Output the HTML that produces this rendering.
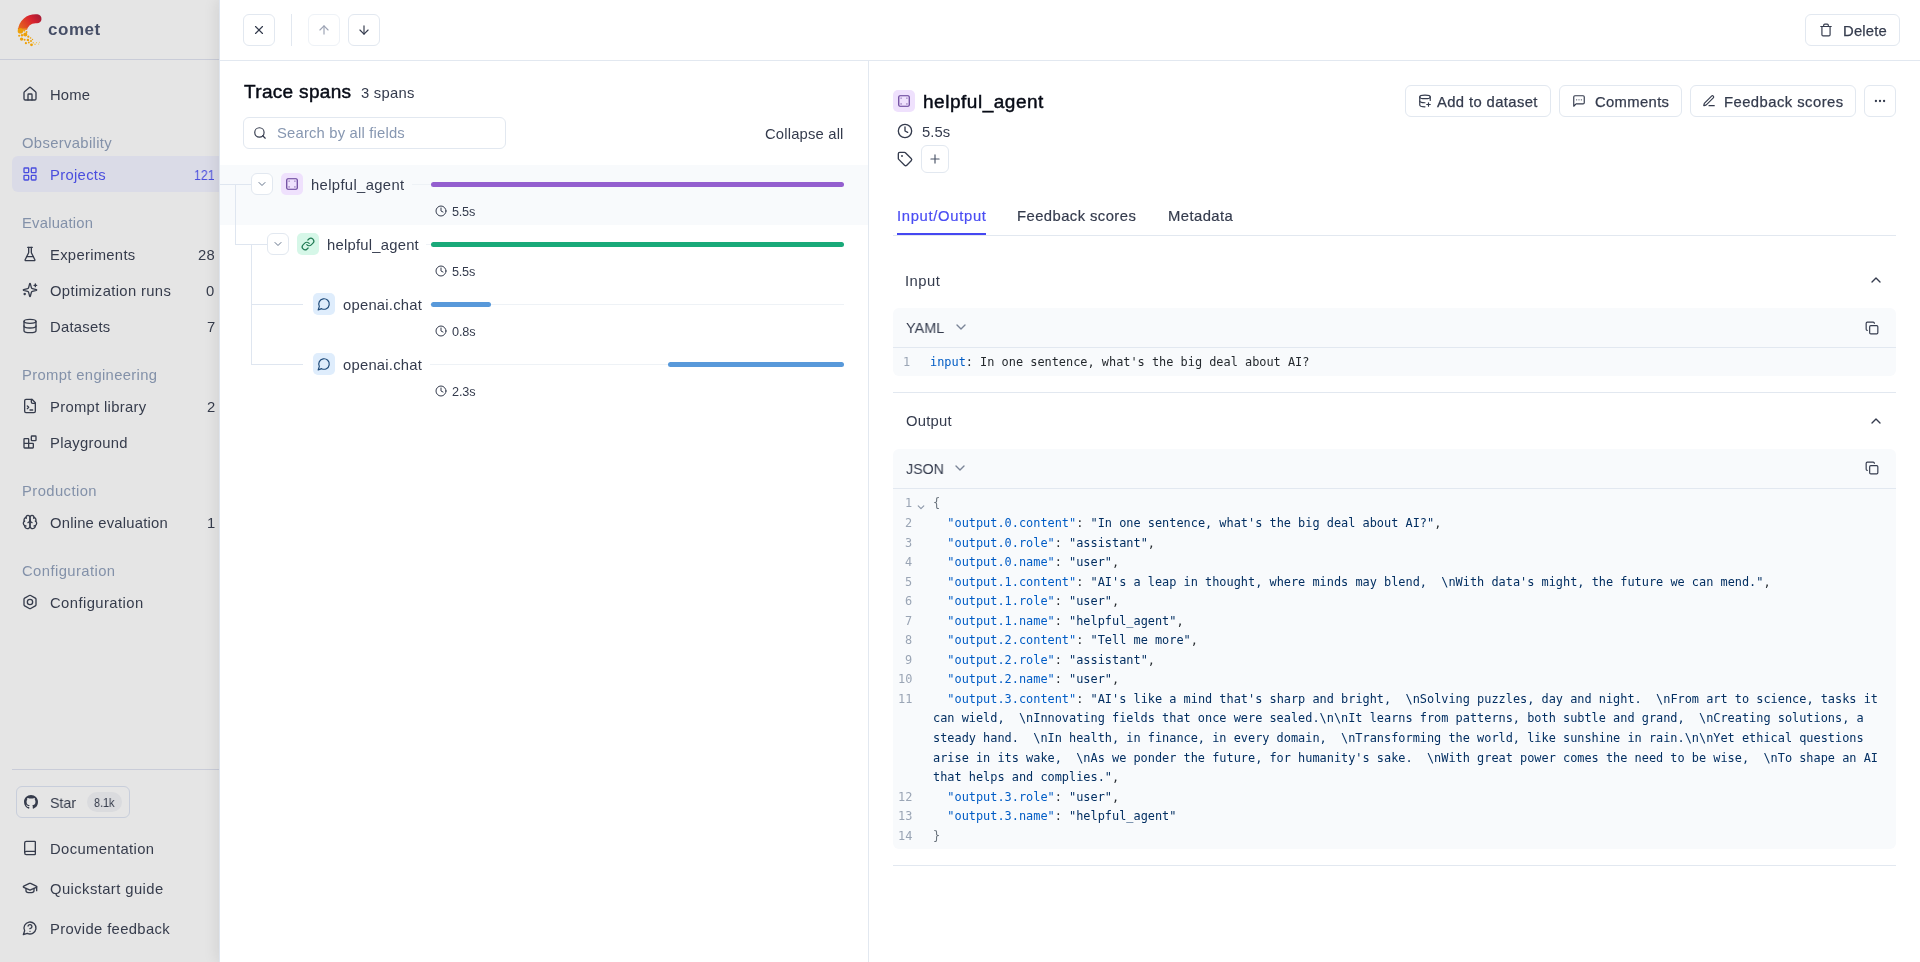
<!DOCTYPE html>
<html lang="en"><head><meta charset="utf-8"><title>Opik - Trace</title>
<style>
*{box-sizing:border-box;margin:0;padding:0}
html,body{width:1920px;height:962px;overflow:hidden;background:#fff}
body{position:relative;font-family:"Liberation Sans",sans-serif;font-size:14px;color:#373d4d}
.b,.t,.ic{position:absolute;display:block}
.t{white-space:pre;will-change:transform}
.ic{fill:none;stroke:currentColor;stroke-linecap:round;stroke-linejoin:round;overflow:visible}
.cd,.ln{font-family:"DejaVu Sans Mono","Liberation Mono",monospace;font-size:11.9px;line-height:19.5px;color:#24292e}
.ln{color:#9aa5b5;text-align:right}

</style></head>
<body>
<div class="b" style="left:0px;top:0px;width:220px;height:962px;background:#e5e5e5"></div>
<div class="b" style="left:0px;top:59px;width:220px;height:1px;background:#c9ccd8"></div>
<svg class="b" style="left:0;top:0" width="110" height="60" viewBox="0 0 110 60">
<defs><linearGradient id="lg" gradientUnits="userSpaceOnUse" x1="40" y1="16" x2="20" y2="32"><stop offset="0" stop-color="#a81c36"/><stop offset=".35" stop-color="#d8232f"/><stop offset="1" stop-color="#e8701a"/></linearGradient></defs>
<path d="M37 18.8C28.8 18.2 22.8 23.5 22.4 31" fill="none" stroke="url(#lg)" stroke-width="9" stroke-linecap="round"/>
<rect x="16" y="29.5" width="14" height="8" fill="#e5e5e5"/>
<path d="M17.9 29.6 L26.9 29.6 L26.9 28 L17.9 28Z" fill="#e6761b"/>
<g fill="#eda10a">
<circle cx="20.4" cy="30.9" r="2.7"/><circle cx="25.3" cy="34.5" r="2"/><circle cx="22" cy="35.3" r="1.2"/><circle cx="19.1" cy="35.8" r="1"/>
<circle cx="28.3" cy="36.7" r="1.1"/><circle cx="21.6" cy="39.1" r="1.7"/><circle cx="24.6" cy="39.8" r="1"/><circle cx="27.9" cy="39.9" r="1.2"/>
<circle cx="31" cy="41" r="1"/><circle cx="25.9" cy="43.2" r="1.1"/><circle cx="28.8" cy="42.5" r=".9"/><circle cx="31.5" cy="44.8" r="1.4"/>
<circle cx="24.2" cy="30.6" r="1.1"/><circle cx="26.6" cy="32" r=".9"/><circle cx="30.6" cy="38" r=".8"/><circle cx="32.5" cy="39.5" r=".7"/>
</g>
<g fill="#efc04a"><circle cx="33.3" cy="42.8" r=".8"/><circle cx="35" cy="44.2" r=".8"/><circle cx="36.5" cy="42.7" r=".6"/><circle cx="38.6" cy="44" r=".6"/><circle cx="39.5" cy="42.2" r=".5"/></g>
</svg>
<span class="t" style="left:48.25px;top:17.00px;font-size:17px;line-height:26px;color:#464e66;letter-spacing:0.548px;font-weight:700;">comet</span>
<svg class="ic" style="left:22px;top:86px;color:#363c4c" width="16" height="16" viewBox="0 0 24 24" stroke-width="2" ><path d="M15 21v-8a1 1 0 0 0-1-1h-4a1 1 0 0 0-1 1v8"/><path d="M3 10a2 2 0 0 1 .709-1.528l7-5.999a2 2 0 0 1 2.582 0l7 5.999A2 2 0 0 1 21 10v9a2 2 0 0 1-2 2H5a2 2 0 0 1-2-2z"/></svg>
<span class="t" style="left:49.85px;top:85.00px;font-size:14.8px;line-height:21px;color:#363c4c;letter-spacing:0.186px;">Home</span>
<span class="t" style="left:22.05px;top:133.00px;font-size:14.8px;line-height:21px;color:#8391a9;letter-spacing:0.348px;">Observability</span>
<div class="b" style="left:12px;top:156px;width:208px;height:36px;background:#dadbe7;border-radius:6px 0 0 6px"></div>
<svg class="ic" style="left:22px;top:166px;color:#4a4ede" width="16" height="16" viewBox="0 0 24 24" stroke-width="2" ><rect width="7" height="7" x="3" y="3" rx="1"/><rect width="7" height="7" x="14" y="3" rx="1"/><rect width="7" height="7" x="14" y="14" rx="1"/><rect width="7" height="7" x="3" y="14" rx="1"/></svg>
<span class="t" style="left:49.85px;top:165.00px;font-size:14.8px;line-height:21px;color:#4a4ede;letter-spacing:0.321px;">Projects</span>
<span class="t" style="left:193.96px;top:165.00px;font-size:14.8px;line-height:21px;color:#4a4ede;letter-spacing:0.000px;transform:scaleX(0.8355);transform-origin:0 0;">121</span>
<span class="t" style="left:21.55px;top:213.00px;font-size:14.8px;line-height:21px;color:#8391a9;letter-spacing:0.214px;">Evaluation</span>
<svg class="ic" style="left:22px;top:246px;color:#363c4c" width="16" height="16" viewBox="0 0 24 24" stroke-width="2" ><path d="M10 2v7.527a2 2 0 0 1-.211.896L4.720 20.550a1 1 0 0 0 .9 1.450h12.760a1 1 0 0 0 .9-1.450l-5.069-10.127A2 2 0 0 1 14 9.527V2"/><path d="M8.500 2h7"/><path d="M7 16h10"/></svg>
<span class="t" style="left:49.85px;top:245.00px;font-size:14.8px;line-height:21px;color:#363c4c;letter-spacing:0.296px;">Experiments</span>
<span class="t" style="left:198.05px;top:245.00px;font-size:14.8px;line-height:21px;color:#363c4c;letter-spacing:0.371px;">28</span>
<svg class="ic" style="left:22px;top:282px;color:#363c4c" width="16" height="16" viewBox="0 0 24 24" stroke-width="2" ><path d="M9.937 15.500A2 2 0 0 0 8.500 14.063l-6.135-1.582a.5.5 0 0 1 0-.962L8.500 9.936A2 2 0 0 0 9.937 8.500l1.582-6.135a.5.5 0 0 1 .963 0L14.063 8.500A2 2 0 0 0 15.500 9.937l6.135 1.581a.5.5 0 0 1 0 .964L15.500 14.063a2 2 0 0 0-1.437 1.437l-1.582 6.135a.5.5 0 0 1-.963 0z"/><path d="M20 3v4"/><path d="M22 5h-4"/><path d="M4 17v2"/><path d="M5 18H3"/></svg>
<span class="t" style="left:50.25px;top:281.00px;font-size:14.8px;line-height:21px;color:#363c4c;letter-spacing:0.354px;">Optimization runs</span>
<span class="t" style="left:206.35px;top:281.00px;font-size:14.8px;line-height:21px;color:#363c4c;letter-spacing:0.000px;">0</span>
<svg class="ic" style="left:22px;top:318px;color:#363c4c" width="16" height="16" viewBox="0 0 24 24" stroke-width="2" ><ellipse cx="12" cy="5" rx="9" ry="3"/><path d="M3 5V19A9 3 0 0 0 21 19V5"/><path d="M3 12A9 3 0 0 0 21 12"/></svg>
<span class="t" style="left:49.85px;top:317.00px;font-size:14.8px;line-height:21px;color:#363c4c;letter-spacing:0.258px;">Datasets</span>
<span class="t" style="left:206.60px;top:317.00px;font-size:14.8px;line-height:21px;color:#363c4c;letter-spacing:0.000px;">7</span>
<span class="t" style="left:21.55px;top:365.00px;font-size:14.8px;line-height:21px;color:#8391a9;letter-spacing:0.346px;">Prompt engineering</span>
<svg class="ic" style="left:22px;top:398px;color:#363c4c" width="16" height="16" viewBox="0 0 24 24" stroke-width="2" ><path d="M15 2H6a2 2 0 0 0-2 2v16a2 2 0 0 0 2 2h12a2 2 0 0 0 2-2V7Z"/><path d="M14 2v4a2 2 0 0 0 2 2h4"/><path d="m8 16 2-2-2-2"/><path d="M12 18h4"/></svg>
<span class="t" style="left:49.85px;top:397.00px;font-size:14.8px;line-height:21px;color:#363c4c;letter-spacing:0.316px;">Prompt library</span>
<span class="t" style="left:206.60px;top:397.00px;font-size:14.8px;line-height:21px;color:#363c4c;letter-spacing:0.000px;">2</span>
<svg class="ic" style="left:22px;top:434px;color:#363c4c" width="16" height="16" viewBox="0 0 24 24" stroke-width="2" ><rect width="7" height="7" x="14" y="3" rx="1"/><path d="M10 21V8a1 1 0 0 0-1-1H4a1 1 0 0 0-1 1v12a1 1 0 0 0 1 1h12a1 1 0 0 0 1-1v-5a1 1 0 0 0-1-1H3"/></svg>
<span class="t" style="left:49.85px;top:433.00px;font-size:14.8px;line-height:21px;color:#363c4c;letter-spacing:0.297px;">Playground</span>
<span class="t" style="left:21.55px;top:481.00px;font-size:14.8px;line-height:21px;color:#8391a9;letter-spacing:0.421px;">Production</span>
<svg class="ic" style="left:22px;top:514px;color:#363c4c" width="16" height="16" viewBox="0 0 24 24" stroke-width="2" ><path d="M12 5a3 3 0 1 0-5.997.125 4 4 0 0 0-2.526 5.770 4 4 0 0 0 .556 6.588A4 4 0 1 0 12 18Z"/><path d="M12 5a3 3 0 1 1 5.997.125 4 4 0 0 1 2.526 5.770 4 4 0 0 1-.556 6.588A4 4 0 1 1 12 18Z"/><path d="M15 13a4.500 4.500 0 0 1-3-4 4.500 4.500 0 0 1-3 4"/><path d="M17.599 6.500a3 3 0 0 0 .399-1.375"/><path d="M6.003 5.125A3 3 0 0 0 6.401 6.500"/><path d="M3.477 10.896a4 4 0 0 1 .585-.396"/><path d="M19.938 10.500a4 4 0 0 1 .585.396"/><path d="M6 18a4 4 0 0 1-1.967-.516"/><path d="M19.967 17.484A4 4 0 0 1 18 18"/></svg>
<span class="t" style="left:50.25px;top:513.00px;font-size:14.8px;line-height:21px;color:#363c4c;letter-spacing:0.205px;">Online evaluation</span>
<span class="t" style="left:207.20px;top:513.00px;font-size:14.8px;line-height:21px;color:#363c4c;letter-spacing:0.000px;">1</span>
<span class="t" style="left:22.05px;top:561.00px;font-size:14.8px;line-height:21px;color:#8391a9;letter-spacing:0.418px;">Configuration</span>
<svg class="ic" style="left:22px;top:594px;color:#363c4c" width="16" height="16" viewBox="0 0 24 24" stroke-width="2" ><path d="M21 16V8a2 2 0 0 0-1-1.730l-7-4a2 2 0 0 0-2 0l-7 4A2 2 0 0 0 3 8v8a2 2 0 0 0 1 1.730l7 4a2 2 0 0 0 2 0l7-4A2 2 0 0 0 21 16z"/><circle cx="12" cy="12" r="4"/></svg>
<span class="t" style="left:50.25px;top:593.00px;font-size:14.8px;line-height:21px;color:#363c4c;letter-spacing:0.426px;">Configuration</span>
<div class="b" style="left:12px;top:769px;width:208px;height:1px;background:#c9ccd8"></div>
<div class="b" style="left:16px;top:786px;width:114px;height:32px;border:1px solid #c8cedb;border-radius:6px"></div>
<svg class="b" style="left:24px;top:795px" width="14" height="14" viewBox="0 0 16 16" fill="#363c4c"><path d="M8 0C3.580 0 0 3.580 0 8c0 3.540 2.290 6.530 5.470 7.590.4.070.550-.170.550-.380 0-.190-.010-.820-.010-1.490-2.010.370-2.530-.490-2.690-.940-.090-.230-.480-.940-.820-1.130-.280-.150-.680-.520-.010-.530.630-.010 1.080.580 1.230.820.720 1.210 1.870.870 2.330.660.070-.520.280-.870.510-1.070-1.780-.200-3.640-.890-3.640-3.950 0-.870.310-1.590.820-2.150-.080-.200-.360-1.020.080-2.120 0 0 .670-.210 2.200.820.640-.180 1.320-.270 2-.270s1.360.090 2 .270c1.530-1.040 2.200-.820 2.200-.820.440 1.100.160 1.920.080 2.120.510.560.820 1.270.820 2.150 0 3.070-1.870 3.750-3.650 3.950.290.250.540.730.540 1.480 0 1.070-.010 1.930-.010 2.200 0 .210.150.460.550.380A8.013 8.013 0 0 0 16 8c0-4.420-3.580-8-8-8z"/></svg>
<span class="t" style="left:49.50px;top:793.00px;font-size:14.8px;line-height:21px;color:#363c4c;letter-spacing:0.000px;transform:scaleX(0.9592);transform-origin:0 0;">Star</span>
<div class="b" style="left:87px;top:792px;width:35px;height:20px;background:#dadbde;border-radius:10px"></div>
<span class="t" style="left:93.50px;top:794.00px;font-size:12.68px;line-height:18px;color:#363c4c;letter-spacing:0.000px;transform:scaleX(0.8572);transform-origin:0 0;">8.1k</span>
<svg class="ic" style="left:22px;top:840px;color:#363c4c" width="16" height="16" viewBox="0 0 24 24" stroke-width="2" ><path d="M4 19.500v-15A2.500 2.500 0 0 1 6.500 2H19a1 1 0 0 1 1 1v18a1 1 0 0 1-1 1H6.500a1 1 0 0 1 0-5H20"/></svg>
<span class="t" style="left:49.85px;top:839.00px;font-size:14.8px;line-height:21px;color:#363c4c;letter-spacing:0.375px;">Documentation</span>
<svg class="ic" style="left:22px;top:880px;color:#363c4c" width="16" height="16" viewBox="0 0 24 24" stroke-width="2" ><path d="M21.420 10.922a1 1 0 0 0-.019-1.838L12.830 5.180a2 2 0 0 0-1.660 0L2.600 9.080a1 1 0 0 0 0 1.832l8.570 3.908a2 2 0 0 0 1.660 0z"/><path d="M22 10v6"/><path d="M6 12.500V16a6 3 0 0 0 12 0v-3.500"/></svg>
<span class="t" style="left:50.25px;top:879.00px;font-size:14.8px;line-height:21px;color:#363c4c;letter-spacing:0.414px;">Quickstart guide</span>
<svg class="ic" style="left:22px;top:920px;color:#363c4c" width="16" height="16" viewBox="0 0 24 24" stroke-width="2" ><path d="M7.900 20A9 9 0 1 0 4 16.100L2 22Z"/><path d="M9.090 9a3 3 0 0 1 5.830 1c0 2-3 3-3 3"/><path d="M12 17h.010"/></svg>
<span class="t" style="left:49.85px;top:919.00px;font-size:14.8px;line-height:21px;color:#363c4c;letter-spacing:0.357px;">Provide feedback</span>
<div class="b" style="left:219px;top:0px;width:1701px;height:962px;background:#fff;border-left:1px solid #dfe5ee;box-shadow:-2px 0 14px rgba(0,0,0,.09)"></div>
<div class="b" style="left:220px;top:60px;width:1700px;height:1px;background:#e2e8f0"></div>
<div class="b" style="left:868px;top:61px;width:1px;height:901px;background:#e2e8f0"></div>
<div class="b" style="left:243px;top:14px;width:32px;height:32px;background:#fff;border:1px solid #e2e8f0;border-radius:6px;"></div>
<svg class="ic" style="left:252px;top:23px;color:#343b4d" width="14" height="14" viewBox="0 0 24 24" stroke-width="2" ><path d="M18 6 6 18"/><path d="m6 6 12 12"/></svg>
<div class="b" style="left:291px;top:14px;width:1px;height:32px;background:#e2e8f0"></div>
<div class="b" style="left:308px;top:14px;width:32px;height:32px;background:#fff;border:1px solid #e2e8f0;border-radius:6px;border-color:#eef2f7"></div>
<svg class="ic" style="left:317px;top:23px;color:#9ca3b4" width="14" height="14" viewBox="0 0 24 24" stroke-width="2" ><path d="m5 12 7-7 7 7"/><path d="M12 19V5"/></svg>
<div class="b" style="left:348px;top:14px;width:32px;height:32px;background:#fff;border:1px solid #e2e8f0;border-radius:6px;"></div>
<svg class="ic" style="left:357px;top:23px;color:#343b4d" width="14" height="14" viewBox="0 0 24 24" stroke-width="2" ><path d="M12 5v14"/><path d="m19 12-7 7-7-7"/></svg>
<div class="b" style="left:1805px;top:14px;width:95px;height:32px;background:#fff;border:1px solid #e2e8f0;border-radius:6px;"></div>
<svg class="ic" style="left:1818.6px;top:23px;color:#343b4d" width="14" height="14" viewBox="0 0 24 24" stroke-width="2" ><path d="M3 6h18"/><path d="M19 6v14c0 1-1 2-2 2H7c-1 0-2-1-2-2V6"/><path d="M8 6V4c0-1 1-2 2-2h4c1 0 2 1 2 2v2"/></svg>
<span class="t" style="left:1842.55px;top:21.00px;font-size:14.8px;line-height:21px;color:#343b4d;letter-spacing:0.211px;-webkit-text-stroke:0.25px #343b4d;">Delete</span>
<span class="t" style="left:244.25px;top:78.00px;font-size:19.03px;line-height:27px;color:#070b16;letter-spacing:0.318px;-webkit-text-stroke:0.45px #070b16;">Trace spans</span>
<span class="t" style="left:360.85px;top:83.00px;font-size:14.8px;line-height:21px;color:#343b4d;letter-spacing:0.262px;">3 spans</span>
<div class="b" style="left:243px;top:117px;width:263px;height:32px;background:#fff;border:1px solid #e2e8f0;border-radius:6px;"></div>
<svg class="ic" style="left:252.5px;top:126.2px;color:#343b4d" width="14" height="14" viewBox="0 0 24 24" stroke-width="2" ><circle cx="11" cy="11" r="8"/><path d="m21 21-4.300-4.300"/></svg>
<span class="t" style="left:276.85px;top:123.00px;font-size:14.8px;line-height:21px;color:#8797b1;letter-spacing:0.185px;">Search by all fields</span>
<span class="t" style="left:765.45px;top:124.00px;font-size:14.8px;line-height:21px;color:#343b4d;letter-spacing:0.172px;">Collapse all</span>
<div class="b" style="left:220px;top:165px;width:648px;height:60px;background:#f8fafc"></div>
<div class="b" style="left:220px;top:184px;width:31px;height:1px;background:#dfe6f0"></div>
<div class="b" style="left:235px;top:184px;width:1px;height:61px;background:#dfe6f0"></div>
<div class="b" style="left:235px;top:244px;width:32px;height:1px;background:#dfe6f0"></div>
<div class="b" style="left:251px;top:244px;width:1px;height:121px;background:#dfe6f0"></div>
<div class="b" style="left:251px;top:304px;width:52px;height:1px;background:#dfe6f0"></div>
<div class="b" style="left:251px;top:364px;width:52px;height:1px;background:#dfe6f0"></div>
<div class="b" style="left:251px;top:173px;width:22px;height:22px;background:#fff;border:1px solid #e2e8f0;border-radius:6px;"></div>
<svg class="ic" style="left:256px;top:178px;color:#64748b" width="12" height="12" viewBox="0 0 24 24" stroke-width="2" ><path d="m6 9 6 6 6-6"/></svg>
<div class="b" style="left:281px;top:173px;width:22px;height:22px;background:#efe1fd;border-radius:5px"></div>
<svg class="ic" style="left:285px;top:177px;color:#5f3a94" width="14" height="14" viewBox="0 0 24 24" stroke-width="2" ><rect width="18" height="18" x="3" y="3" rx="2"/><path d="M7 7h.010"/><path d="M17 7h.010"/><path d="M7 17h.010"/><path d="M17 17h.010"/></svg>
<span class="t" style="left:310.55px;top:175.00px;font-size:14.8px;line-height:21px;color:#343b4d;letter-spacing:0.354px;">helpful_agent</span>
<div class="b" style="left:411.7px;top:184px;width:432.3px;height:1px;background:#eef2f6"></div>
<div class="b" style="left:431px;top:181.7px;width:413px;height:5.6px;background:#945fcf;border-radius:3px"></div>
<svg class="ic" style="left:435px;top:205px;color:#343b4d" width="12" height="12" viewBox="0 0 24 24" stroke-width="2" ><circle cx="12" cy="12" r="10"/><polyline points="12 6 12 12 16 14"/></svg>
<span class="t" style="left:451.75px;top:203.00px;font-size:12.68px;line-height:18px;color:#343b4d;letter-spacing:-0.239px;">5.5s</span>
<div class="b" style="left:267px;top:233px;width:22px;height:22px;background:#fff;border:1px solid #e2e8f0;border-radius:6px;"></div>
<svg class="ic" style="left:272px;top:238px;color:#64748b" width="12" height="12" viewBox="0 0 24 24" stroke-width="2" ><path d="m6 9 6 6 6-6"/></svg>
<div class="b" style="left:297px;top:233px;width:22px;height:22px;background:#d6f7e8;border-radius:5px"></div>
<svg class="ic" style="left:301px;top:237px;color:#1f7a53" width="14" height="14" viewBox="0 0 24 24" stroke-width="2" ><path d="M10 13a5 5 0 0 0 7.540.540l3-3a5 5 0 0 0-7.070-7.070l-1.720 1.710"/><path d="M14 11a5 5 0 0 0-7.540-.540l-3 3a5 5 0 0 0 7.070 7.070l1.710-1.710"/></svg>
<span class="t" style="left:326.65px;top:235.00px;font-size:14.8px;line-height:21px;color:#343b4d;letter-spacing:0.238px;">helpful_agent</span>
<div class="b" style="left:426.4px;top:244px;width:417.6px;height:1px;background:#eef2f6"></div>
<div class="b" style="left:431px;top:241.7px;width:413px;height:5.6px;background:#19a979;border-radius:3px"></div>
<svg class="ic" style="left:435px;top:265px;color:#343b4d" width="12" height="12" viewBox="0 0 24 24" stroke-width="2" ><circle cx="12" cy="12" r="10"/><polyline points="12 6 12 12 16 14"/></svg>
<span class="t" style="left:451.75px;top:263.00px;font-size:12.68px;line-height:18px;color:#343b4d;letter-spacing:-0.239px;">5.5s</span>
<div class="b" style="left:313px;top:293px;width:22px;height:22px;background:#dfedfc;border-radius:5px"></div>
<svg class="ic" style="left:317px;top:297px;color:#1f4b7a" width="14" height="14" viewBox="0 0 24 24" stroke-width="2" ><path d="M7.900 20A9 9 0 1 0 4 16.100L2 22Z"/></svg>
<span class="t" style="left:342.95px;top:295.00px;font-size:14.8px;line-height:21px;color:#343b4d;letter-spacing:0.230px;">openai.chat</span>
<div class="b" style="left:429.8px;top:304px;width:414.2px;height:1px;background:#eef2f6"></div>
<div class="b" style="left:431px;top:301.7px;width:60.30000000000001px;height:5.6px;background:#5899da;border-radius:3px"></div>
<svg class="ic" style="left:435px;top:325px;color:#343b4d" width="12" height="12" viewBox="0 0 24 24" stroke-width="2" ><circle cx="12" cy="12" r="10"/><polyline points="12 6 12 12 16 14"/></svg>
<span class="t" style="left:451.75px;top:323.00px;font-size:12.68px;line-height:18px;color:#343b4d;letter-spacing:-0.105px;">0.8s</span>
<div class="b" style="left:313px;top:353px;width:22px;height:22px;background:#dfedfc;border-radius:5px"></div>
<svg class="ic" style="left:317px;top:357px;color:#1f4b7a" width="14" height="14" viewBox="0 0 24 24" stroke-width="2" ><path d="M7.900 20A9 9 0 1 0 4 16.100L2 22Z"/></svg>
<span class="t" style="left:342.95px;top:355.00px;font-size:14.8px;line-height:21px;color:#343b4d;letter-spacing:0.230px;">openai.chat</span>
<div class="b" style="left:429.8px;top:364px;width:414.2px;height:1px;background:#eef2f6"></div>
<div class="b" style="left:668px;top:361.7px;width:176px;height:5.6px;background:#5899da;border-radius:3px"></div>
<svg class="ic" style="left:435px;top:385px;color:#343b4d" width="12" height="12" viewBox="0 0 24 24" stroke-width="2" ><circle cx="12" cy="12" r="10"/><polyline points="12 6 12 12 16 14"/></svg>
<span class="t" style="left:451.75px;top:383.00px;font-size:12.68px;line-height:18px;color:#343b4d;letter-spacing:-0.105px;">2.3s</span>
<div class="b" style="left:893px;top:90px;width:22px;height:22px;background:#efe1fd;border-radius:5px"></div>
<svg class="ic" style="left:897px;top:94px;color:#5f3a94" width="14" height="14" viewBox="0 0 24 24" stroke-width="2" ><rect width="18" height="18" x="3" y="3" rx="2"/><path d="M7 7h.010"/><path d="M17 7h.010"/><path d="M7 17h.010"/><path d="M17 17h.010"/></svg>
<span class="t" style="left:923.05px;top:88.00px;font-size:19.03px;line-height:27px;color:#070b16;letter-spacing:0.516px;-webkit-text-stroke:0.45px #070b16;">helpful_agent</span>
<svg class="ic" style="left:897px;top:123px;color:#343b4d" width="16" height="16" viewBox="0 0 24 24" stroke-width="2" ><circle cx="12" cy="12" r="10"/><polyline points="12 6 12 12 16 14"/></svg>
<span class="t" style="left:922.05px;top:122.00px;font-size:14.8px;line-height:21px;color:#343b4d;letter-spacing:0.077px;">5.5s</span>
<svg class="ic" style="left:897px;top:151px;color:#343b4d" width="16" height="16" viewBox="0 0 24 24" stroke-width="2" ><path d="M12.586 2.586A2 2 0 0 0 11.172 2H4a2 2 0 0 0-2 2v7.172a2 2 0 0 0 .586 1.414l8.704 8.704a2.426 2.426 0 0 0 3.420 0l6.580-6.580a2.426 2.426 0 0 0 0-3.420z"/><circle cx="7.500" cy="7.500" r=".5" fill="currentColor"/></svg>
<div class="b" style="left:921px;top:145px;width:28px;height:28px;background:#fff;border:1px solid #e2e8f0;border-radius:6px;"></div>
<svg class="ic" style="left:928px;top:152px;color:#4b5468" width="14" height="14" viewBox="0 0 24 24" stroke-width="2" ><path d="M5 12h14"/><path d="M12 5v14"/></svg>
<div class="b" style="left:1405px;top:85px;width:146px;height:32px;background:#fff;border:1px solid #e2e8f0;border-radius:6px;"></div>
<svg class="ic" style="left:1417.8px;top:94px;color:#343b4d" width="14" height="14" viewBox="0 0 24 24" stroke-width="2" ><ellipse cx="12" cy="5" rx="9" ry="3"/><path d="M3 5v14a9 3 0 0 0 9 3"/><path d="M3 12a9 3 0 0 0 9 3"/><path d="M21 5v6"/><path d="M15 18h6"/><path d="M18 15v6"/></svg>
<span class="t" style="left:1437.05px;top:92.00px;font-size:14.8px;line-height:21px;color:#343b4d;letter-spacing:0.383px;-webkit-text-stroke:0.25px #343b4d;">Add to dataset</span>
<div class="b" style="left:1559px;top:85px;width:123px;height:32px;background:#fff;border:1px solid #e2e8f0;border-radius:6px;"></div>
<svg class="ic" style="left:1571.6px;top:94px;color:#343b4d" width="14" height="14" viewBox="0 0 24 24" stroke-width="2" ><path d="M21 15a2 2 0 0 1-2 2H7l-4 4V5a2 2 0 0 1 2-2h14a2 2 0 0 1 2 2z"/><path d="M8 10h.010"/><path d="M12 10h.010"/><path d="M16 10h.010"/></svg>
<span class="t" style="left:1594.55px;top:92.00px;font-size:14.8px;line-height:21px;color:#343b4d;letter-spacing:0.352px;-webkit-text-stroke:0.25px #343b4d;">Comments</span>
<div class="b" style="left:1690px;top:85px;width:166px;height:32px;background:#fff;border:1px solid #e2e8f0;border-radius:6px;"></div>
<svg class="ic" style="left:1702.3px;top:94px;color:#343b4d" width="14" height="14" viewBox="0 0 24 24" stroke-width="2" ><path d="M12 20h9"/><path d="M16.376 3.622a1 1 0 0 1 3.002 3.002L7.368 18.635a2 2 0 0 1-.855.506l-2.872.838a.5.5 0 0 1-.620-.620l.838-2.872a2 2 0 0 1 .506-.854z"/></svg>
<span class="t" style="left:1723.85px;top:92.00px;font-size:14.8px;line-height:21px;color:#343b4d;letter-spacing:0.459px;-webkit-text-stroke:0.25px #343b4d;">Feedback scores</span>
<div class="b" style="left:1864px;top:85px;width:32px;height:32px;background:#fff;border:1px solid #e2e8f0;border-radius:6px;"></div>
<svg class="ic" style="left:1873px;top:94px;color:#343b4d" width="14" height="14" viewBox="0 0 24 24" stroke-width="2" ><circle cx="12" cy="12" r="1"/><circle cx="19" cy="12" r="1"/><circle cx="5" cy="12" r="1"/></svg>
<span class="t" style="left:896.55px;top:206.00px;font-size:14.8px;line-height:21px;color:#4a4df3;letter-spacing:0.679px;-webkit-text-stroke:0.2px #4a4df3;">Input/Output</span>
<span class="t" style="left:1017.25px;top:206.00px;font-size:14.8px;line-height:21px;color:#343b4d;letter-spacing:0.437px;-webkit-text-stroke:0.2px #343b4d;">Feedback scores</span>
<span class="t" style="left:1167.55px;top:206.00px;font-size:14.8px;line-height:21px;color:#343b4d;letter-spacing:0.448px;-webkit-text-stroke:0.2px #343b4d;">Metadata</span>
<div class="b" style="left:893px;top:235px;width:1003px;height:1px;background:#e2e8f0"></div>
<div class="b" style="left:897px;top:233px;width:89px;height:2px;background:#4547f1"></div>
<span class="t" style="left:905.05px;top:271.00px;font-size:14.8px;line-height:21px;color:#343b4d;letter-spacing:0.500px;">Input</span>
<svg class="ic" style="left:1868px;top:272px;color:#343b4d" width="16" height="16" viewBox="0 0 24 24" stroke-width="2" ><path d="m18 15-6-6-6 6"/></svg>
<div class="b" style="left:893px;top:392px;width:1003px;height:1px;background:#e2e8f0"></div>
<span class="t" style="left:906.05px;top:411.00px;font-size:14.8px;line-height:21px;color:#343b4d;letter-spacing:0.258px;">Output</span>
<svg class="ic" style="left:1868px;top:413px;color:#343b4d" width="16" height="16" viewBox="0 0 24 24" stroke-width="2" ><path d="m18 15-6-6-6 6"/></svg>
<div class="b" style="left:893px;top:865px;width:1003px;height:1px;background:#e2e8f0"></div>
<div class="b" style="left:893px;top:308px;width:1003px;height:68px;background:#f8fafc;border-radius:6px"></div>
<div class="b" style="left:893px;top:347px;width:1003px;height:1px;background:#e2e8f0"></div>
<span class="t" style="left:905.80px;top:318.00px;font-size:14.8px;line-height:21px;color:#343b4d;letter-spacing:0.000px;transform:scaleX(0.9752);transform-origin:0 0;">YAML</span>
<svg class="ic" style="left:953px;top:319px;color:#7a8497" width="16" height="16" viewBox="0 0 24 24" stroke-width="2" ><path d="m6 9 6 6 6-6"/></svg>
<svg class="ic" style="left:1865px;top:321px;color:#343b4d" width="14" height="14" viewBox="0 0 24 24" stroke-width="2" ><rect width="14" height="14" x="8" y="8" rx="2" ry="2"/><path d="M4 16c-1.100 0-2-.900-2-2V4c0-1.100.900-2 2-2h10c1.100 0 2 .900 2 2"/></svg>
<div class="b" style="left:893px;top:449px;width:1003px;height:400px;background:#f8fafc;border-radius:6px"></div>
<div class="b" style="left:893px;top:488px;width:1003px;height:1px;background:#e2e8f0"></div>
<span class="t" style="left:905.80px;top:459.00px;font-size:14.8px;line-height:21px;color:#343b4d;letter-spacing:0.000px;transform:scaleX(0.9593);transform-origin:0 0;">JSON</span>
<svg class="ic" style="left:952px;top:460px;color:#7a8497" width="16" height="16" viewBox="0 0 24 24" stroke-width="2" ><path d="m6 9 6 6 6-6"/></svg>
<svg class="ic" style="left:1865px;top:461px;color:#343b4d" width="14" height="14" viewBox="0 0 24 24" stroke-width="2" ><rect width="14" height="14" x="8" y="8" rx="2" ry="2"/><path d="M4 16c-1.100 0-2-.900-2-2V4c0-1.100.900-2 2-2h10c1.100 0 2 .900 2 2"/></svg>
<span class="t ln" style="right:1010.3px;top:352.8px">1</span>
<span class="t cd" style="left:929.6px;top:352.8px"><span style="color:#005cc5">input</span>: In one sentence, what's the big deal about AI?</span>
<span class="t ln" style="right:1007.4px;top:494.4px">1</span>
<span class="t cd" style="left:933.1px;top:494.4px"><span style="color:#6a737d">{</span></span>
<span class="t ln" style="right:1007.4px;top:513.95px">2</span>
<span class="t cd" style="left:933.1px;top:513.95px">  <span style="color:#005cc5">"output.0.content"</span>: <span style="color:#032f62">"In one sentence, what's the big deal about AI?"</span>,</span>
<span class="t ln" style="right:1007.4px;top:533.5px">3</span>
<span class="t cd" style="left:933.1px;top:533.5px">  <span style="color:#005cc5">"output.0.role"</span>: <span style="color:#032f62">"assistant"</span>,</span>
<span class="t ln" style="right:1007.4px;top:553.05px">4</span>
<span class="t cd" style="left:933.1px;top:553.05px">  <span style="color:#005cc5">"output.0.name"</span>: <span style="color:#032f62">"user"</span>,</span>
<span class="t ln" style="right:1007.4px;top:572.6px">5</span>
<span class="t cd" style="left:933.1px;top:572.6px">  <span style="color:#005cc5">"output.1.content"</span>: <span style="color:#032f62">"AI's a leap in thought, where minds may blend,  \nWith data's might, the future we can mend."</span>,</span>
<span class="t ln" style="right:1007.4px;top:592.15px">6</span>
<span class="t cd" style="left:933.1px;top:592.15px">  <span style="color:#005cc5">"output.1.role"</span>: <span style="color:#032f62">"user"</span>,</span>
<span class="t ln" style="right:1007.4px;top:611.7px">7</span>
<span class="t cd" style="left:933.1px;top:611.7px">  <span style="color:#005cc5">"output.1.name"</span>: <span style="color:#032f62">"helpful_agent"</span>,</span>
<span class="t ln" style="right:1007.4px;top:631.25px">8</span>
<span class="t cd" style="left:933.1px;top:631.25px">  <span style="color:#005cc5">"output.2.content"</span>: <span style="color:#032f62">"Tell me more"</span>,</span>
<span class="t ln" style="right:1007.4px;top:650.8px">9</span>
<span class="t cd" style="left:933.1px;top:650.8px">  <span style="color:#005cc5">"output.2.role"</span>: <span style="color:#032f62">"assistant"</span>,</span>
<span class="t ln" style="right:1007.4px;top:670.35px">10</span>
<span class="t cd" style="left:933.1px;top:670.35px">  <span style="color:#005cc5">"output.2.name"</span>: <span style="color:#032f62">"user"</span>,</span>
<span class="t ln" style="right:1007.4px;top:689.9px">11</span>
<span class="t cd" style="left:933.1px;top:689.9px">  <span style="color:#005cc5">"output.3.content"</span>: <span style="color:#032f62">"AI's like a mind that's sharp and bright,  \nSolving puzzles, day and night.  \nFrom art to science, tasks it</span></span>
<span class="t cd" style="left:933.1px;top:709.45px"><span style="color:#032f62">can wield,  \nInnovating fields that once were sealed.\n\nIt learns from patterns, both subtle and grand,  \nCreating solutions, a</span></span>
<span class="t cd" style="left:933.1px;top:729.0px"><span style="color:#032f62">steady hand.  \nIn health, in finance, in every domain,  \nTransforming the world, like sunshine in rain.\n\nYet ethical questions</span></span>
<span class="t cd" style="left:933.1px;top:748.55px"><span style="color:#032f62">arise in its wake,  \nAs we ponder the future, for humanity's sake.  \nWith great power comes the need to be wise,  \nTo shape an AI</span></span>
<span class="t cd" style="left:933.1px;top:768.1px"><span style="color:#032f62">that helps and complies."</span>,</span>
<span class="t ln" style="right:1007.4px;top:787.65px">12</span>
<span class="t cd" style="left:933.1px;top:787.65px">  <span style="color:#005cc5">"output.3.role"</span>: <span style="color:#032f62">"user"</span>,</span>
<span class="t ln" style="right:1007.4px;top:807.2px">13</span>
<span class="t cd" style="left:933.1px;top:807.2px">  <span style="color:#005cc5">"output.3.name"</span>: <span style="color:#032f62">"helpful_agent"</span></span>
<span class="t ln" style="right:1007.4px;top:826.75px">14</span>
<span class="t cd" style="left:933.1px;top:826.75px"><span style="color:#6a737d">}</span></span>
<svg class="ic" style="left:916.8px;top:502.6px;color:#8b96a8" width="8" height="8" viewBox="0 0 10 10" stroke-width="1.4"><path d="M1.500 3.500 5 7 8.500 3.500"/></svg>
</body></html>
